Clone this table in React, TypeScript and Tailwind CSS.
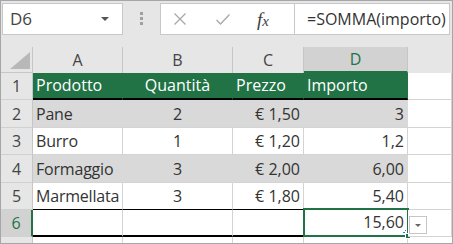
import React from 'react';

const wc = 'border-r border-b border-r-[#d4d4d4] border-b-[#d4d4d4] bg-white';
const bc = 'border-r border-b border-r-[#d9d9d9] border-b-[#d4d4d4] bg-[#d9d9d9]';
const gc = 'border-r border-b-2 border-r-[#217346] border-b-black bg-[#217346] text-white';
const rh = 'flex items-end justify-center pb-[2px] border-r border-b border-r-[#c6c6c6] border-b-[#d0d0d0] bg-[#e6e6e6] text-[#444]';

const Cell = ({ children, className = '' }: { children?: React.ReactNode; className?: string }) => (
    <div className={`relative flex items-end whitespace-nowrap px-[3px] pb-[2px] ${className}`}>{children}</div>
);

const data = [
    { n: '2', band: true, a: 'Pane', b: '2', c: '€ 1,50', d: '3' },
    { n: '3', band: false, a: 'Burro', b: '1', c: '€ 1,20', d: '1,2' },
    { n: '4', band: true, a: 'Formaggio', b: '3', c: '€ 2,00', d: '6,00' },
    { n: '5', band: false, a: 'Marmellata', b: '3', c: '€ 1,80', d: '5,40' },
];

export default function App() {
    return (
        <div className="w-[453px] h-[244px] overflow-hidden border border-[#a6a6a6] bg-[#e6e6e6] font-['Open_Sans',sans-serif]">
            {/* formula bar */}
            <div className="flex h-[46px] items-start pt-[2px]">
                <div className="ml-[1px] flex h-[32px] w-[121px] items-center justify-between border border-[#c8c8c8] bg-white pl-[7px] pr-[13px]">
                    <span className="text-[17px] text-[#444]">D6</span>
                    <svg width="8" height="4" viewBox="0 0 8 4"><path d="M0 0h8L4 4z" fill="#555" /></svg>
                </div>
                <div className="ml-[17px] mt-[9px] flex flex-col gap-[2px]">
                    <div className="h-[3px] w-[3px] bg-[#a0a0a0]" />
                    <div className="h-[3px] w-[3px] bg-[#a0a0a0]" />
                    <div className="h-[3px] w-[3px] bg-[#a0a0a0]" />
                </div>
                <div className="ml-[17px] flex h-[32px] w-[135px] items-center border border-[#c8c8c8] bg-white pl-[12px]">
                    <svg width="14" height="12" viewBox="0 0 14 12">
                        <path d="M1.5 0.5l11 11M12.5 0.5l-11 11" stroke="#a8a8a8" strokeWidth="1.3" fill="none" />
                    </svg>
                    <svg className="ml-[29px]" width="14" height="11" viewBox="0 0 14 11">
                        <path d="M0.5 6l4 4L13.5 0.5" stroke="#a8a8a8" strokeWidth="1.3" fill="none" />
                    </svg>
                    <span className="ml-[27px] font-['Liberation_Serif',serif] text-[19px] italic leading-none text-[#404040]">
                        f<span className="text-[15px]">x</span>
                    </span>
                </div>
                <div className="flex h-[32px] w-[155px] items-center overflow-hidden whitespace-nowrap border-y border-r border-[#c8c8c8] bg-white pl-[12px] text-[16px] text-[#333]">
                    =SOMMA(importo)
                </div>
            </div>

            {/* sheet */}
            <div className="grid grid-cols-[32px_90px_110px_71px_104px_44px] grid-rows-[26px_27px_28px_27px_28px_27px_27px_6px] text-[16px] leading-[22px] text-[#333]">
                {/* column headers */}
                <div className="relative border-r border-b border-r-[#c6c6c6] border-b-[#c6c6c6] bg-[#e6e6e6]">
                    <svg className="absolute left-[9px] top-[5px]" width="20" height="17" viewBox="0 0 20 17">
                        <path d="M20 0V17H0z" fill="#b8b8b8" />
                    </svg>
                </div>
                <div className="flex items-end justify-center pb-[2px] border-r border-r-[#c6c6c6] bg-[#e6e6e6] text-[#444]">A</div>
                <div className="flex items-end justify-center pb-[2px] border-r border-r-[#c6c6c6] bg-[#e6e6e6] text-[#444]">B</div>
                <div className="flex items-end justify-center pb-[2px] border-r border-r-[#c6c6c6] bg-[#e6e6e6] text-[#444]">C</div>
                <div className="flex items-end justify-center pb-[1px] border-r border-b-2 border-r-[#c6c6c6] border-b-[#217346] bg-[#d2d2d2] text-[#217346]">D</div>
                <div className="bg-[#e6e6e6]" />

                {/* row 1 */}
                <div className={rh}>1</div>
                <Cell className={gc}>Prodotto</Cell>
                <Cell className={`${gc} justify-center`}>Quantità</Cell>
                <Cell className={gc}>Prezzo</Cell>
                <Cell className={gc}>Importo</Cell>
                <Cell className={wc} />

                {/* rows 2-5 */}
                {data.map(r => (
                    <React.Fragment key={r.n}>
                        <div className={rh}>{r.n}</div>
                        <Cell className={`${r.band ? bc : r.n === '5' ? `${wc} border-b-black` : wc} overflow-hidden tracking-[-0.2px]`}>{r.a}</Cell>
                        <Cell className={`${r.band ? bc : r.n === '5' ? `${wc} border-b-black` : wc} justify-center`}>{r.b}</Cell>
                        <Cell className={`${r.band ? bc : r.n === '5' ? `${wc} border-b-black` : wc} justify-end`}>{r.c}</Cell>
                        <Cell className={`${r.band ? bc : wc} justify-end`}>{r.d}</Cell>
                        <Cell className={wc} />
                    </React.Fragment>
                ))}

                {/* row 6 */}
                <div className="flex items-end justify-center pb-[2px] border-r-2 border-b border-r-[#217346] border-b-[#d0d0d0] bg-[#d2d2d2] text-[#217346]">6</div>
                <Cell className="border-r border-b-2 border-r-[#d4d4d4] border-b-black bg-white" />
                <Cell className="border-r border-b-2 border-r-[#d4d4d4] border-b-black bg-white" />
                <Cell className="border-r border-b-2 border-r-black border-b-black bg-white" />
                <Cell className="border-r border-b-2 border-r-[#d4d4d4] border-b-black bg-white justify-end">
                    15,60
                    <div className="absolute -left-[1px] -top-[2px] h-[29px] w-[106px] border-2 border-[#217346]" />
                    <svg className="absolute left-[98px] top-[20px]" width="5" height="5" viewBox="0 0 5 5">
                        <rect x="3" y="0" width="1" height="1" fill="#3b6fd0" />
                        <rect x="1" y="2" width="2" height="1" fill="#3b6fd0" />
                        <rect x="3" y="3" width="1" height="1" fill="#7aa0e0" />
                    </svg>
                    <div className="absolute left-[101px] top-[23px] h-[6px] w-[6px] border border-white bg-[#217346]" />
                    <div className="absolute left-[105px] top-[6px] z-10 flex h-[18px] w-[18px] items-center justify-center border border-[#c6c6c6] bg-white">
                        <svg width="6" height="3" viewBox="0 0 6 3"><path d="M0 0h6L3 3z" fill="#666" /></svg>
                    </div>
                </Cell>
                <Cell className={wc} />

                {/* row 7 (partial) */}
                <div className="border-r border-r-[#c6c6c6] bg-[#e6e6e6]" />
                <div className="border-r border-r-[#d4d4d4] bg-white" />
                <div className="border-r border-r-[#d4d4d4] bg-white" />
                <div className="border-r border-r-[#d4d4d4] bg-white" />
                <div className="border-r border-r-[#d4d4d4] bg-white" />
                <div className="bg-white" />
            </div>
        </div>
    );
}
